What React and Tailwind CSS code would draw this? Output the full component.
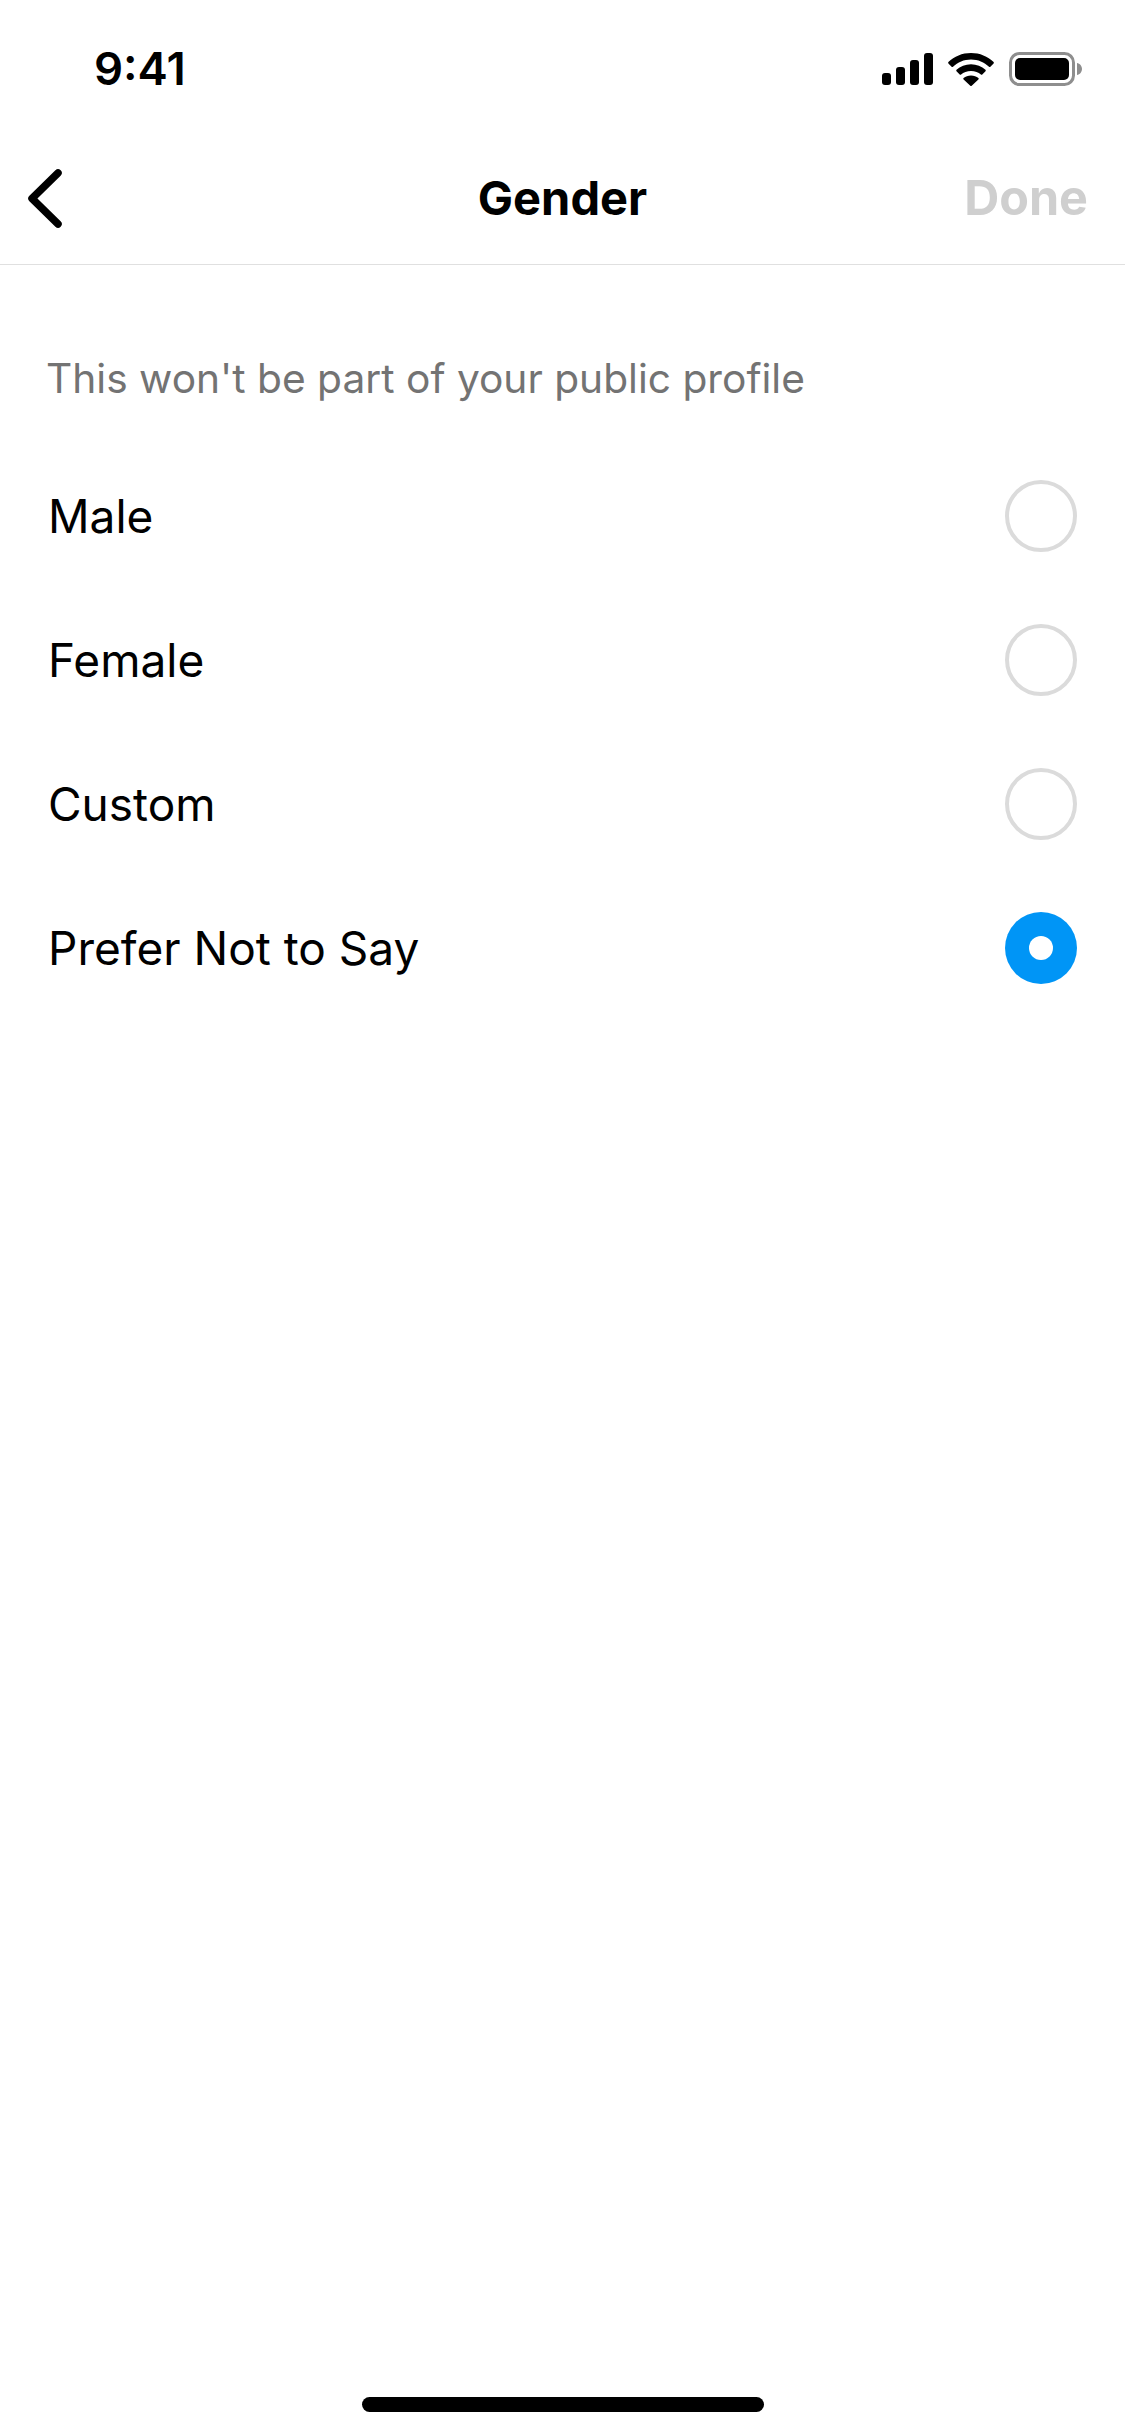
import React from "react";

const options = [
  { label: "Male", selected: false },
  { label: "Female", selected: false },
  { label: "Custom", selected: false },
  { label: "Prefer Not to Say", selected: true },
];

function StatusIcons() {
  return (
    <div className="flex items-center">
      <svg width="51" height="32" viewBox="0 0 51 32" fill="#000">
        <rect x="0" y="20" width="9" height="12" rx="3" />
        <rect x="14" y="14" width="9" height="18" rx="3" />
        <rect x="28" y="7" width="9" height="25" rx="3" />
        <rect x="42" y="0" width="9" height="32" rx="3" />
      </svg>
      <svg width="46" height="33" viewBox="0 0 46 33" fill="#000" className="ml-[15px]">
        <path d="M23 0C14.2 0 6.3 3.4 0.4 9c-.4.4-.4 1 0 1.4l3.2 3.3c.4.4 1 .4 1.4 0C9.7 9.2 16 6.4 23 6.4s13.3 2.8 18 7.3c.4.4 1 .4 1.4 0l3.2-3.3c.4-.4.4-1 0-1.4C39.7 3.4 31.8 0 23 0z" />
        <path d="M23 11.2c-5.6 0-10.7 2.1-14.5 5.6-.4.4-.4 1 0 1.4l3.2 3.3c.4.4 1 .4 1.4 0 2.5-2.2 5.9-3.6 9.9-3.6s7.4 1.4 9.9 3.6c.4.4 1 .4 1.4 0l3.2-3.3c.4-.4.4-1 0-1.4-3.8-3.5-8.9-5.6-14.5-5.6z" />
        <path d="M23 22.4c-2.9 0-5.5 1-7.4 2.7-.4.4-.4 1 0 1.4l6.7 6.2c.4.4 1 .4 1.4 0l6.7-6.2c.4-.4.4-1 0-1.4-1.9-1.7-4.5-2.7-7.4-2.7z" />
      </svg>
      <svg width="73" height="34" viewBox="0 0 73 34" className="ml-[15px]">
        <rect x="1.5" y="1.5" width="63" height="31" rx="9" fill="none" stroke="#8e8e8e" strokeWidth="3" />
        <rect x="6" y="6" width="54" height="22" rx="5" fill="#000" />
        <path d="M68 11c2.800.6 5 3 5 6s-2.200 5.400-5 6z" fill="#8e8e8e" />
      </svg>
    </div>
  );
}

function Radio({ selected }) {
  if (selected) {
    return (
      <span className="flex h-[72px] w-[72px] items-center justify-center rounded-full bg-[#0095f6]">
        <span className="h-6 w-6 rounded-full bg-white" />
      </span>
    );
  }
  return <span className="h-[72px] w-[72px] rounded-full border-4 border-[#dbdbdb]" />;
}

export default function App() {
  return (
    <div className="relative flex h-[2436px] w-[1125px] flex-col bg-white font-['Inter',sans-serif] text-black">
      <div className="flex h-[132px] items-start justify-between pl-[94px] pr-[43px]">
        <span className="mt-[47px] text-[45.500px] leading-[44px] font-semibold">9:41</span>
        <div className="mt-[52px]">
          <StatusIcons />
        </div>
      </div>

      <div className="relative flex h-[133px] items-center justify-between border-b border-[#e0e0e0] pl-[26px] pr-[37px]">
        <svg width="38" height="60" viewBox="0 0 38 60" fill="none" stroke="#000" strokeWidth="7.500" strokeLinecap="round" strokeLinejoin="round">
          <path d="M32 5 6 30.500 32 56" />
        </svg>
        <span className="absolute inset-x-0 text-center text-[47px] leading-[58px] font-bold">Gender</span>
        <span className="text-[48.500px] leading-[58px] font-bold text-[#cfcfcf]">Done</span>
      </div>

      <p className="mt-[90px] pl-[46px] text-[40.700px] leading-[48px] text-[#737373]">This won't be part of your public profile</p>

      <div className="mt-[41px] flex flex-col">
        {options.map((o) => (
          <div key={o.label} className="flex h-[144px] items-center justify-between pl-[48px] pr-[48px]">
            <span className="text-[46px] leading-[54px]">{o.label}</span>
            <Radio selected={o.selected} />
          </div>
        ))}
      </div>

      <div className="mt-auto mb-[24px] flex justify-center">
        <div className="h-[15px] w-[402px] rounded-full bg-black" />
      </div>
    </div>
  );
}
